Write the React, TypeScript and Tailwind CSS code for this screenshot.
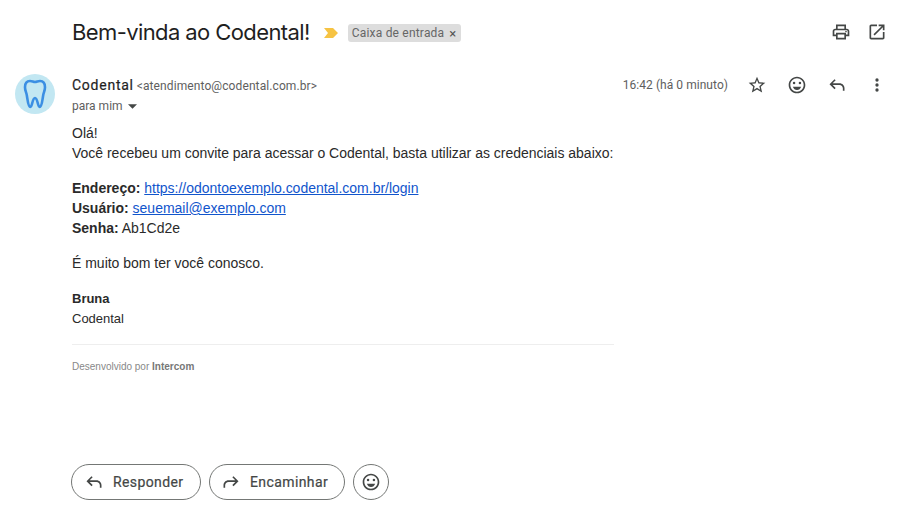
import React from "react";

const ic = "text-[#444746] fill-current";

const Printer = () => (
  <svg viewBox="0 0 24 24" className={`w-5 h-5 ${ic}`}>
    <path d="M19 8h-1V3H6v5H5c-1.66 0-3 1.34-3 3v6h4v4h12v-4h4v-6c0-1.66-1.34-3-3-3zM8 5h8v3H8V5zm8 12v2H8v-4h8v2zm2-2v-2H6v2H4v-4c0-.55.45-1 1-1h14c.55 0 1 .45 1 1v4h-2z" />
    <circle cx="18" cy="11.5" r="1" />
  </svg>
);
const OpenNew = () => (
  <svg viewBox="0 0 24 24" className={`w-5 h-5 ${ic}`}>
    <path d="M19 19H5V5h7V3H5c-1.11 0-2 .9-2 2v14c0 1.1.89 2 2 2h14c1.1 0 2-.9 2-2v-7h-2v7zM14 3v2h3.59l-9.83 9.83 1.41 1.41L19 6.41V10h2V3h-7z" />
  </svg>
);
const Star = () => (
  <svg viewBox="0 0 24 24" className={`w-5 h-5 ${ic}`}>
    <path d="M22 9.24l-7.19-.62L12 2 9.19 8.63 2 9.24l5.46 4.73L5.82 21 12 17.27 18.18 21l-1.63-7.03L22 9.24zM12 15.4l-3.76 2.27 1-4.28-3.32-2.88 4.38-.38L12 6.1l1.71 4.04 4.38.38-3.32 2.88 1 4.28L12 15.4z" />
  </svg>
);
const Mood = () => (
  <svg viewBox="0 0 24 24" className={`w-5 h-5 ${ic}`}>
    <path d="M11.99 2C6.47 2 2 6.48 2 12s4.47 10 9.99 10C17.52 22 22 17.52 22 12S17.52 2 11.99 2zM12 20c-4.42 0-8-3.58-8-8s3.58-8 8-8 8 3.58 8 8-3.58 8-8 8z" />
    <circle cx="15.5" cy="9.5" r="1.5" />
    <circle cx="8.5" cy="9.5" r="1.5" />
    <path d="M12 18c2.28 0 4.22-1.66 5-4H7c.78 2.34 2.72 4 5 4z" />
  </svg>
);
const Reply = () => (
  <svg viewBox="0 0 24 24" className={`w-5 h-5 ${ic}`}>
    <path d="M21 19h-2v-3c0-2.2-1.8-4-4-4H6.83l3.58 3.59L9 17l-6-6 6-6 1.41 1.41L6.83 10H15c3.31 0 6 2.69 6 6v3z" />
  </svg>
);
const Forward = () => (
  <svg viewBox="0 0 24 24" className={`w-5 h-5 ${ic}`}>
    <path d="M3 19h2v-3c0-2.2 1.8-4 4-4h8.170l-3.580 3.590L15 17l6-6-6-6-1.410 1.410L17.170 10H9c-3.310 0-6 2.690-6 6v3z" />
  </svg>
);
const More = () => (
  <svg viewBox="0 0 24 24" className={`w-5 h-5 ${ic}`}>
    <circle cx="12" cy="6" r="2" />
    <circle cx="12" cy="12" r="2" />
    <circle cx="12" cy="18" r="2" />
  </svg>
);
const Tooth = () => (
  <svg viewBox="0 0 24 30" className="w-[24px] h-[30px]" fill="none" stroke="#3b8fe3" strokeWidth="2.6" strokeLinejoin="round" strokeLinecap="round">
    <path d="M7 2c2 0 3.300 1 5 1s3-1 5-1c3.200 0 5 2.600 5 6.200 0 3.200-1.200 5-1.800 8-.6 3-1.200 11.800-3.600 11.800-2 0-1.800-9-4.600-9s-2.600 9-4.600 9c-2.400 0-3-8.800-3.600-11.800-.6-3-1.800-4.800-1.800-8C2 4.600 3.800 2 7 2z" />
  </svg>
);

const IconSlot = ({ children }: { children: React.ReactNode }) => (
  <div className="w-10 h-10 flex items-center justify-center">{children}</div>
);

export default function App() {
  return (
    <div className="h-[517px] w-[902px] bg-white flex flex-col overflow-hidden font-['Liberation_Sans',sans-serif] text-[14px] text-[#2a2a2a]">
      <div className="h-[64px] flex items-center pl-[72px] pr-[15px]">
        <h1 className="font-['Inter',sans-serif] text-[22px] font-normal text-[#1f1f1f] tracking-[-0.6px]">Bem-vinda ao Codental!</h1>
        <svg viewBox="0 0 14 10" className="w-[14px] h-[10px] mt-[2px] ml-[14px] fill-[#f6c343]">
          <path d="M0 0h9l5 5-5 5H0l4-5z" />
        </svg>
        <span className="ml-[10px] mt-[2px] h-[18px] flex items-center gap-[5px] rounded-[3px] bg-[#dddddd] pl-1 pr-[5px] font-['Roboto',sans-serif] text-[12px] tracking-[0.2px] text-[#666666]">
          Caixa de entrada <span className="text-[13px] leading-none text-[#555555]">×</span>
        </span>
        <div className="ml-auto flex items-center gap-4">
          <Printer />
          <OpenNew />
        </div>
      </div>

      <div className="flex pl-[15px] pr-[5px] h-[48px]">
        <div className="w-[40px] h-[40px] mt-[10px] rounded-full bg-[#c2e7f2] flex items-center justify-center shrink-0">
          <Tooth />
        </div>
        <div className="ml-[17px] flex flex-col pt-[12px] font-['Roboto',sans-serif]">
          <div className="flex items-baseline gap-[3px] leading-[18px]">
            <span className="text-[14px] font-normal tracking-[0.75px] text-[#1f1f1f] [-webkit-text-stroke:0.2px_#1f1f1f]">Codental</span>
            <span className="text-[12px] tracking-[0.1px] text-[#5e5e5e]">&lt;atendimento@codental.com.br&gt;</span>
          </div>
          <div className="flex items-center mt-[3px] text-[12px] leading-[16px] text-[#5e5e5e]">
            para mim
            <svg viewBox="0 0 10 5" className="w-[9px] h-[5px] ml-[5px] fill-[#444746]"><path d="M0 0h10L5 5z" /></svg>
          </div>
        </div>
        <div className="ml-auto flex items-start pt-[1px] font-['Roboto',sans-serif]">
          <span className="text-[12px] tracking-[0.05px] leading-[40px] text-[#5e5e5e] mr-[9px]">16:42 (há 0 minuto)</span>
          <IconSlot><Star /></IconSlot>
          <IconSlot><Mood /></IconSlot>
          <IconSlot><Reply /></IconSlot>
          <IconSlot><More /></IconSlot>
        </div>
      </div>

      <div className="ml-[72px] pt-[11px] w-[542px] leading-[20px] tracking-[-0.012px]">
        <p>Olá!</p>
        <p className="whitespace-nowrap">Você recebeu um convite para acessar o Codental, basta utilizar as credenciais abaixo:</p>
        <p className="mt-[15px]"><b>Endereço:</b> <a className="underline text-[#1155cc]">https://odontoexemplo.codental.com.br/login</a></p>
        <p><b>Usuário:</b> <a className="underline text-[#1155cc]">seuemail@exemplo.com</a></p>
        <p><b>Senha:</b> Ab1Cd2e</p>
        <p className="mt-[15px]">É muito bom ter você conosco.</p>
        <p className="mt-[16px] text-[13px]"><b>Bruna</b></p>
        <p className="text-[13px]">Codental</p>
        <div className="mt-[15px] border-t border-[#eeeeee] pt-[14px] text-[10px] tracking-normal leading-[16px] text-[#888888]">
          Desenvolvido por <b className="text-[#777777]">Intercom</b>
        </div>
      </div>

      <div className="mt-auto mb-[17px] ml-[71px] flex items-center gap-2 font-['Roboto',sans-serif] text-[14px] font-normal tracking-[0.4px] text-[#444746]">
        <div className="h-[36px] w-[130px] rounded-full border border-[#747775] flex items-center pl-[12px] gap-[9px]">
          <Reply /> <span className="[-webkit-text-stroke:0.2px_#444746]">Responder</span>
        </div>
        <div className="h-[36px] w-[136px] rounded-full border border-[#747775] flex items-center pl-[11px] gap-[9px]">
          <Forward /> <span className="[-webkit-text-stroke:0.2px_#444746]">Encaminhar</span>
        </div>
        <div className="h-[36px] w-[36px] rounded-full border border-[#747775] flex items-center justify-center">
          <Mood />
        </div>
      </div>
    </div>
  );
}
